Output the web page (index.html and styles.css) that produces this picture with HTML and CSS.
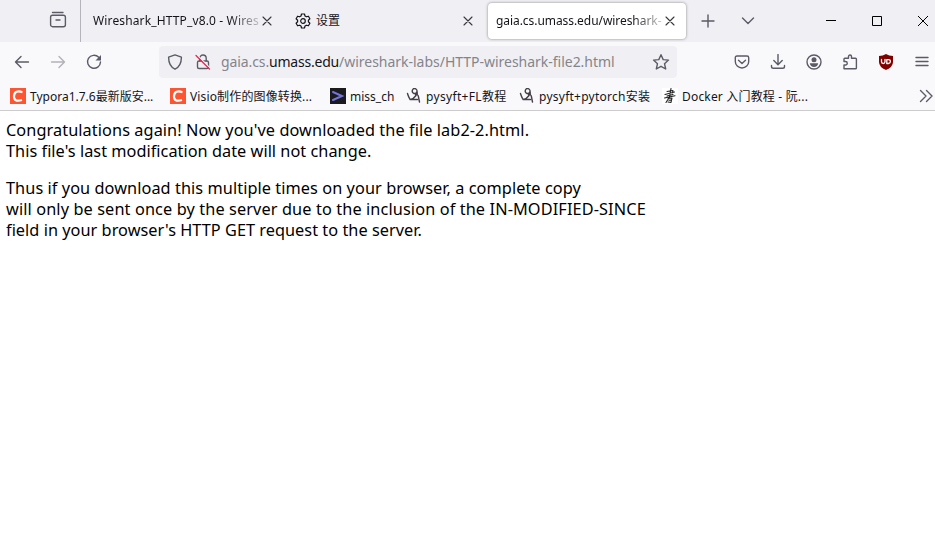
FILE: index.html
```html
<!DOCTYPE html>
<html lang="en">
<head>
<meta charset="utf-8">
<title>gaia.cs.umass.edu/wireshark-labs</title>
<link rel="stylesheet" href="styles.css">
</head>
<body>
<header class="tabs">
  <div class="view"><svg width="18" height="18" viewBox="0 0 18 18"><path d="M3.5 1.5h10.5"/><rect x="1.6" y="4.3" width="14.8" height="11.4" rx="2"/><path d="M7 9h4"/></svg></div>
  <div class="tab first"><span class="label fade t1">Wireshark_HTTP_v8.0 - Wires</span><svg class="x" width="10" height="10" viewBox="0 0 10 10"><path d="M1 1l8 8M9 1l-8 8"/></svg></div>
  <div class="tab second"><svg class="gear" width="16" height="16" viewBox="0 0 16 16"><path d="M6.5 1h3l.5 2 1.400.8 2-.6 1.500 2.600-1.500 1.400v1.600l1.500 1.400-1.500 2.600-2-.6-1.400.8-.5 2h-3L6 13l-1.400-.8-2 .6-1.500-2.600 1.500-1.400V7.200L1.100 5.800l1.500-2.600 2 .600L6 3z"/><circle cx="8" cy="8" r="2.300"/></svg><span class="label">设置</span><svg class="x" width="10" height="10" viewBox="0 0 10 10"><path d="M1 1l8 8M9 1l-8 8"/></svg></div>
  <div class="tab active"><span class="label fade t3">gaia.cs.umass.edu/wireshark-</span><svg class="x" width="10" height="10" viewBox="0 0 10 10"><path d="M1 1l8 8M9 1l-8 8"/></svg></div>
  <svg class="plus" width="14" height="14" viewBox="0 0 14 14"><path d="M7 1v12M1 7h12"/></svg>
  <svg class="chev" width="14" height="14" viewBox="0 0 14 14"><path d="M1.500 4l5.500 5.500L12.500 4"/></svg>
  <div class="window">
    <svg width="10" height="10" viewBox="0 0 10 10"><path d="M0 4.500h10"/></svg>
    <svg width="10" height="10" viewBox="0 0 10 10"><path d="M.5.5h9v9h-9z"/></svg>
    <svg width="10" height="10" viewBox="0 0 10 10"><path d="M0 0l10 10M10 0L0 10"/></svg>
  </div>
</header>
<nav class="toolbar">
  <div class="history">
    <svg width="16" height="16" viewBox="0 0 16 16"><path d="M14.500 8H1.500M7 2.500L1.500 8 7 13.500"/></svg>
    <svg class="off" width="16" height="16" viewBox="0 0 16 16"><path d="M1.500 8h13M9 2.500L14.500 8 9 13.500"/></svg>
    <svg width="16" height="16" viewBox="0 0 16 16"><path d="M12.700 3.300A6.500 6.500 0 1 0 14.500 8"/><path class="solid" d="M15 1v5.500H9.500z"/></svg>
  </div>
  <div class="url">
    <svg width="16" height="16" viewBox="0 0 16 16"><path d="M8 .9l6.400 2.300c0 5-1.400 9.500-6.400 12C3 12.700 1.600 8.200 1.600 3.200z"/></svg>
    <svg class="lock" width="16" height="16" viewBox="0 0 16 16"><path d="M4.800 7V4.200a3.200 3.200 0 0 1 6.400 0V7"/><rect x="2.500" y="7" width="11" height="7.500" rx="1.500"/><path class="halo" d="M2 1l13 13"/><path class="slash" d="M1 1.500l13.500 13.500"/></svg>
    <span class="address"><span class="sub">gaia.cs.</span><b>umass.edu</b>/wireshark-labs/HTTP-wireshark-file2.html</span>
    <svg class="star" width="18" height="18" viewBox="0 0 18 18"><path d="M9 1.700l2.200 4.900 5.300.5-4 3.600 1.200 5.300L9 13.300 4.300 16l1.200-5.300-4-3.600 5.300-.5z"/></svg>
  </div>
  <div class="actions">
    <svg width="16" height="16" viewBox="0 0 16 16"><path d="M3 2h10q1.700 0 1.700 1.700V7.500a6.700 6.500 0 0 1-13.400 0V3.700Q1.300 2 3 2zM4.500 6.200L8 9.500l3.500-3.300"/></svg>
    <svg width="16" height="16" viewBox="0 0 16 16"><path d="M8 .5v10M3.800 6.500L8 10.700l4.200-4.200M1.500 11.500v1q0 1.800 1.800 1.800h9.400q1.800 0 1.800-1.800v-1"/></svg>
    <svg width="16" height="16" viewBox="0 0 16 16"><circle cx="8" cy="8" r="7"/><circle class="solid" cx="8" cy="5.700" r="2.500"/><path class="solid" d="M3.800 9.300h8.400q-.5 3.700-4.200 3.700T3.800 9.300z"/></svg>
    <svg width="16" height="16" viewBox="0 0 16 16"><path d="M2 14.800V11h1.500a1.700 1.700 0 0 0 0-3.500H2V5q0-.8.800-.8h3.700V2.500a1.500 1.500 0 0 1 3 0v1.700h4q.9 0 .9.800v9q0 .8-.9.800z"/></svg>
    <svg width="16" height="16" viewBox="0 0 16 16"><path class="red" d="M8 0q3 2 7 2v6q0 5-7 8Q1 13 1 8V2q4 0 7-2z"/><path class="mark" d="M3.500 5.500v2.200q0 1.800 1.700 1.800T7 7.700V5.500M8.800 5.700v3.800h1.600q2-.2 2-2t-2-1.800z"/></svg>
    <svg width="16" height="16" viewBox="0 0 16 16"><path d="M2 3.500h12M2 7.500h12M2 11.500h12"/></svg>
  </div>
</nav>
<nav class="bookmarks">
  <a class="b1"><svg width="16" height="16" viewBox="0 0 16 16"><path class="orange" d="M0 0h16v16H0z"/><path class="c" d="M12.500 4.200Q4.800 1.500 4 8q-.3 6.500 8 4"/></svg><span>Typora1.7.6最新版安...</span></a>
  <a class="b2"><svg width="16" height="16" viewBox="0 0 16 16"><path class="orange" d="M0 0h16v16H0z"/><path class="c" d="M12.500 4.200Q4.800 1.500 4 8q-.3 6.500 8 4"/></svg><span>Visio制作的图像转换...</span></a>
  <a class="b3"><svg width="16" height="16" viewBox="0 0 16 16"><path class="black" d="M0 0h16v16H0z"/><path class="prompt" d="M3 4l9 4-9 4"/></svg><span>miss_ch</span></a>
  <a class="b4"><svg class="scribble" width="16" height="16" viewBox="0 0 16 16"><path d="M1.500 5.500q1.500 5 3 6 3-.5 5.500-4M11 3.500Q10.500 6 8 5.500 5.500 4.500 6.500 2T10 1q1.500 1 1.200 5M9.500 6.500q2-.5 2.800 1.500l1.200 6M4 11.500h7.500"/></svg><span>pysyft+FL教程</span></a>
  <a class="b5"><svg class="scribble" width="16" height="16" viewBox="0 0 16 16"><path d="M1.500 5.500q1.500 5 3 6 3-.5 5.500-4M11 3.500Q10.500 6 8 5.500 5.500 4.500 6.500 2T10 1q1.500 1 1.200 5M9.500 6.500q2-.5 2.800 1.500l1.200 6M4 11.500h7.500"/></svg><span>pysyft+pytorch安装</span></a>
  <a class="b6"><svg class="brush" width="16" height="16" viewBox="0 0 16 16"><path class="paper" d="M0 0h16v16H0z"/><path d="M5 3.500l6-1-.5 2.500M3 6.500L12.500 4M5 8l6-1.500M2.500 10L13 7.700M9 .5L7.500 9 4 14.500M6 10.500l4-.5-1 4.500-3-.5M7 12.300l2-.3"/></svg><span>Docker 入门教程 - 阮...</span></a>
  <svg class="more" width="14" height="14" viewBox="0 0 14 14"><path d="M1.500 1.500L7 7l-5.500 5.500M7.500 1.500L13 7l-5.500 5.500"/></svg>
</nav>
<main>
  <p><span class="l1">Congratulations again! Now you've downloaded the file lab2-2.html.</span><br><span class="l2">This file's last modification date will not change.</span></p>
  <p><span class="l3">Thus if you download this multiple times on your browser, a complete copy</span><br><span class="l4">will only be sent once by the server due to the inclusion of the IN-MODIFIED-SINCE</span><br><span class="l5">field in your browser's HTTP GET request to the server.</span></p>
</main>
</body>
</html>
```
FILE: styles.css
```css
* { box-sizing: border-box; }
body { margin: 0; height: 559px; overflow: hidden; background: #fff; color: #000; font-family: "Noto Sans", "Noto Sans CJK SC", sans-serif; }
svg { display: block; flex: none; fill: none; stroke: #5b5b66; stroke-width: 1.4; stroke-linecap: round; stroke-linejoin: round; }
.solid { fill: #5b5b66; stroke: none; }
.tabs { display: flex; align-items: center; height: 42px; background: #f0eff4; font-size: 12px; color: #15141a; }
.view { width: 81px; height: 42px; padding: 11px 0 0 49px; border-right: 1px solid #b5b4ba; }
.tab { display: flex; align-items: center; height: 38px; }
.label { white-space: nowrap; line-height: 18px; }
.fade { width: 167px; margin-right: 2px; -webkit-mask-image: linear-gradient(to right, #000 82%, transparent 104%); mask-image: linear-gradient(to right, #000 82%, transparent 104%); }
.t1 { letter-spacing: .14px; }
.t3 { letter-spacing: -.06px; }
.x { stroke: #38383d; stroke-width: 1.1; }
.first { width: 207px; padding-left: 12px; }
.second { width: 200px; padding-left: 7px; }
.second .label { margin-left: 5px; }
.second .x { margin-left: auto; margin-right: 15px; }
.gear { stroke: #15141a; stroke-width: 1.2; }
.active { width: 198px; height: 36px; margin-bottom: 1px; padding-left: 8px; background: #fff; border-radius: 4px; box-shadow: 0 0 3px rgba(0,0,0,.45); }
.plus { margin-left: 15px; }
.chev { margin-left: 26px; }
.window { display: flex; gap: 36px; margin-left: auto; padding-right: 7px; }
.window svg { stroke: #000; stroke-width: 1; stroke-linecap: butt; stroke-linejoin: miter; }
.toolbar { display: flex; align-items: center; height: 40px; background: #f9f9fb; }
.history { display: flex; gap: 20px; width: 159px; padding-left: 14px; }
.off { opacity: .45; }
.url { display: flex; align-items: center; width: 518px; height: 32px; padding: 0 7px 0 8px; border-radius: 4px; background: #f0f0f4; }
.lock { margin-left: 12px; }
.halo { stroke: #f0f0f4; stroke-width: 1.2; }
.slash { stroke: #e22850; stroke-width: 1.3; }
.address { margin-left: 10px; font-size: 14px; line-height: 20px; color: #85848b; white-space: nowrap; letter-spacing: -.02px; }
.sub { letter-spacing: -.1px; }
.address b { color: #15141a; font-weight: 400; letter-spacing: -.22px; }
.star { margin-left: auto; }
.actions { display: flex; gap: 20px; margin-left: 57px; }
.red { fill: #800000; stroke: none; }
.mark { stroke: #fff; stroke-width: 1.3; }
.bookmarks { display: flex; align-items: center; height: 29px; padding-left: 10px; background: #f9f9fb; border-bottom: 1px solid #ccc; font-size: 12px; color: #15141a; }
.bookmarks a { display: flex; align-items: center; gap: 4px; white-space: nowrap; line-height: 18px; }
.bookmarks span { padding-top: 1px; }
.b1, .b2 { width: 160px; }
.b2 { letter-spacing: .14px; }
.b3 { width: 76px; }
.b4 { width: 113px; letter-spacing: .33px; }
.b5 { width: 143px; letter-spacing: .25px; }
.b6 { letter-spacing: .18px; }
.more { margin-left: auto; margin-right: 2px; }
.orange { fill: #fc5531; stroke: none; }
.c { stroke: #fff; stroke-width: 2.2; stroke-linecap: butt; }
.black { fill: #1b1b1f; stroke: none; }
.prompt { stroke: #7375d8; stroke-width: 2; stroke-linejoin: miter; }
.scribble { stroke: #454047; stroke-width: 1.4; }
.brush { stroke: #222; stroke-width: 1.1; }
.paper { fill: #fff; stroke: none; }
main { padding: 9px 6px; font-size: 16.3px; line-height: 21px; white-space: nowrap; }
p { margin: 0 0 16px; }
.l1 { letter-spacing: .08px; }
.l2 { letter-spacing: .03px; }
.l3 { letter-spacing: .07px; }
.l4 { letter-spacing: .115px; }
.l5 { letter-spacing: .035px; }
```
